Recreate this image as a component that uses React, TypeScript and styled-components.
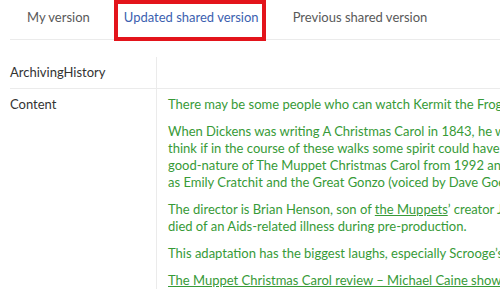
import React from 'react';
import styled, { createGlobalStyle } from 'styled-components';

const GlobalStyle = createGlobalStyle`
  html, body {
    margin: 0;
    padding: 0;
    background: #fff;
    overflow: hidden;
  }
  body {
    font-family: Lato, "Open Sans", sans-serif;
    color: #333;
  }
`;

const Page = styled.div`
  width: 900px;
  padding: 0 0 0 10px;
`;

const TabBar = styled.div`
  position: relative;
  display: flex;
  height: 39px;
  border-bottom: 1px solid #ebebeb;
`;

const Tab = styled.div<{ $active?: boolean }>`
  display: flex;
  align-items: center;
  padding: 0 17px 5px;
  font-size: 13px;
  color: ${(p) => (p.$active ? '#3c5fb0' : '#595959')};
  white-space: nowrap;
`;

const Highlight = styled.div`
  position: absolute;
  left: 104px;
  top: 0;
  width: 144px;
  height: 33px;
  border: 4px solid #e3141b;
`;

const Table = styled.div`
  margin-top: 17px;
  display: grid;
  grid-template-columns: 147px 1fr;
`;

const Label = styled.div<{ $last?: boolean }>`
  font-size: 13px;
  color: #333;
  padding: 7px 0 0;
  border-right: 1px solid #ebebeb;
  border-bottom: ${(p) => (p.$last ? 'none' : '1px solid #ebebeb')};
  height: ${(p) => (p.$last ? 'auto' : '32px')};
  box-sizing: border-box;
`;

const Value = styled.div<{ $last?: boolean }>`
  padding: ${(p) => (p.$last ? '7px 0 0 11px' : '0')};
  border-bottom: ${(p) => (p.$last ? 'none' : '1px solid #ebebeb')};
`;

const Para = styled.p`
  margin: 0 0 10px;
  font-size: 13px;
  line-height: 17px;
  color: #379a37;
  white-space: nowrap;
`;

const Link = styled.span`
  text-decoration: underline;
`;

export default function App() {
  return (
    <>
      <GlobalStyle />
      <Page>
        <TabBar>
          <Tab>My version</Tab>
          <Tab $active>Updated shared version</Tab>
          <Tab>Previous shared version</Tab>
          <Highlight />
        </TabBar>
        <Table>
          <Label>ArchivingHistory</Label>
          <Value />
          <Label $last>Content</Label>
          <Value $last>
            <Para>There may be some people who can watch Kermit the Frog as Bob Cratchit without shedding a tear.</Para>
            <Para>
              When Dickens was writing A Christmas Carol in 1843, he would walk the streets of London at night. I like to
              <br />
              think if in the course of these walks some spirit could have shown him the warmth and
              <br />
              good-nature of The Muppet Christmas Carol from 1992 and Michael Caine as Scrooge, with Miss Piggy
              <br />
              as Emily Cratchit and the Great Gonzo (voiced by Dave Goelz) as Charles Dickens himself.
            </Para>
            <Para>
              The director is Brian Henson, son of <Link>the Muppets</Link>’ creator Jim Henson, who
              <br />
              died of an Aids-related illness during pre-production.
            </Para>
            <Para>This adaptation has the biggest laughs, especially Scrooge’s encounter with the ghosts.</Para>
            <Para>
              <Link>The Muppet Christmas Carol review – Michael Caine shows his softer side</Link>
            </Para>
          </Value>
        </Table>
      </Page>
    </>
  );
}
